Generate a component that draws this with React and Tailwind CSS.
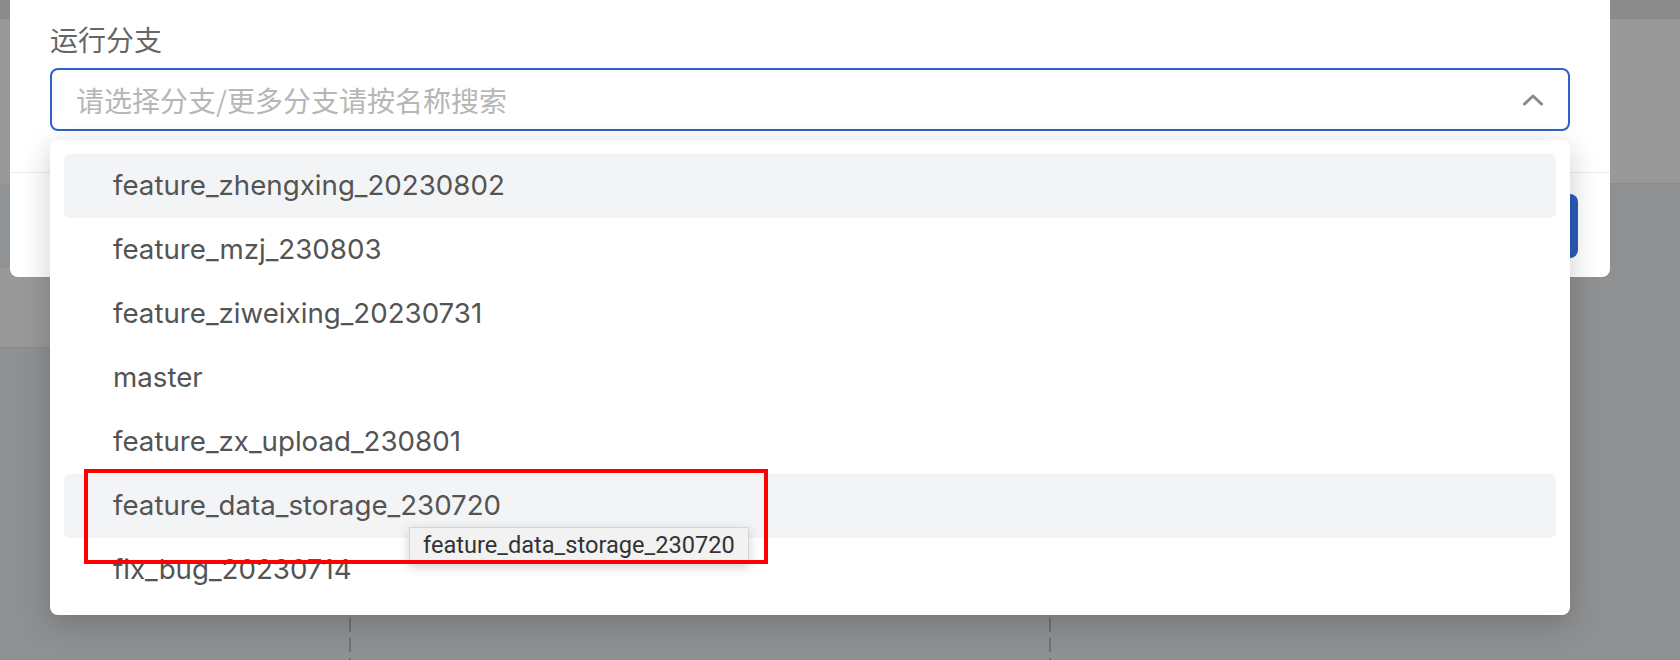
import React from 'react';

const branches = [
  { name: 'feature_zhengxing_20230802', active: true },
  { name: 'feature_mzj_230803' },
  { name: 'feature_ziweixing_20230731' },
  { name: 'master' },
  { name: 'feature_zx_upload_230801' },
  { name: 'feature_data_storage_230720', active: true },
  { name: 'fix_bug_20230714' },
];

const cjk = { fontFamily: '"Noto Sans CJK SC", "Noto Sans", sans-serif' };
const latin = { fontFamily: 'Inter, "Noto Sans CJK SC", sans-serif' };

// dimmed page behind the modal
const BackgroundPage = () => (
  <div className="flex flex-col h-full">
    <div className="h-[19px] bg-[#8b8b8c] border-b border-[#858586]" />
    <div className="flex">
      <div className="w-[350px] flex flex-col">
        <div className="h-[165px] bg-[#999999]" />
        <div className="h-[84px] bg-[#8f9396]" />
        <div className="h-[80px] bg-[#999999] border-b border-[#8a8a8b]" />
      </div>
      <div className="flex-1">
        <div className="h-[165px] bg-[#999999] border-b border-[#8c8c8d]" />
      </div>
    </div>
    {/* table area */}
    <div className="flex-1 flex pt-[10px]">
      <div className="w-[349px]" />
      <div className="w-[2px] bg-[repeating-linear-gradient(to_bottom,#707173_0_14px,transparent_14px_20px)]" />
      <div className="w-[698px]" />
      <div className="w-[2px] bg-[repeating-linear-gradient(to_bottom,#707173_0_14px,transparent_14px_20px)]" />
    </div>
  </div>
);

const ChevronUp = () => (
  <svg width="20" height="12" viewBox="0 0 20 12" fill="none">
    <polyline points="1.5,10 10,2 18.5,10" stroke="#8a8a8a" strokeWidth="3" strokeLinecap="round" strokeLinejoin="round" />
  </svg>
);

export default function App() {
  return (
    <div className="relative w-[1680px] h-[660px] overflow-hidden bg-[#8f9092]">
      <BackgroundPage />

      {/* Modal */}
      <div className="absolute left-[10px] top-0 w-[1600px] h-[277px] bg-white rounded-b-lg flex flex-col">
        <div className="pt-[19px] px-[40px] pb-[41px] border-b border-[#ececec]">
          <div className="h-10 leading-10 text-[28px] text-[#666666]" style={cjk}>运行分支</div>
          <div className="mt-[9px] h-[63px] border-2 border-[#2b63cb] rounded-lg flex items-center justify-between pl-[24px] pr-[25px]">
            <span className="text-[28px] text-[#b6b6b6]" style={cjk}>请选择分支/更多分支请按名称搜索</span>
            <ChevronUp />
          </div>
        </div>
        <div className="flex justify-end pt-[21px] px-[32px]">
          <button className="h-16 w-[140px] rounded-lg bg-[#2a5db9] text-white text-[26px]" style={cjk}>确定</button>
        </div>
      </div>

      {/* Dropdown */}
      <div className="absolute left-[50px] top-[140px] w-[1520px] h-[475px] bg-white rounded-lg shadow-[0_8px_30px_rgba(0,0,0,0.2)] px-[14px] pt-[14px] overflow-hidden">
        {branches.map((b) => (
          <div
            key={b.name}
            className={`h-16 rounded-md pl-[49px] flex items-center text-[27.7px] text-[#545454] ${b.active ? 'bg-[#f3f4f6]' : ''}`}
            style={latin}
          >
            {b.name}
          </div>
        ))}
      </div>

      {/* native title tooltip */}
      <div
        className="absolute left-[409px] top-[527px] h-[37px] px-[13px] flex items-center bg-[#f2f2f2] border border-[#d7d7d7] shadow-[0_3px_10px_rgba(0,0,0,0.18)] text-[23.6px] text-[#333333]"
        style={{ fontFamily: 'Roboto, sans-serif' }}
      >
        feature_data_storage_230720
      </div>

      {/* annotation box */}
      <div className="absolute left-[84px] top-[469px] w-[684px] h-[95px] border-4 border-[#ff0000]" />
    </div>
  );
}
